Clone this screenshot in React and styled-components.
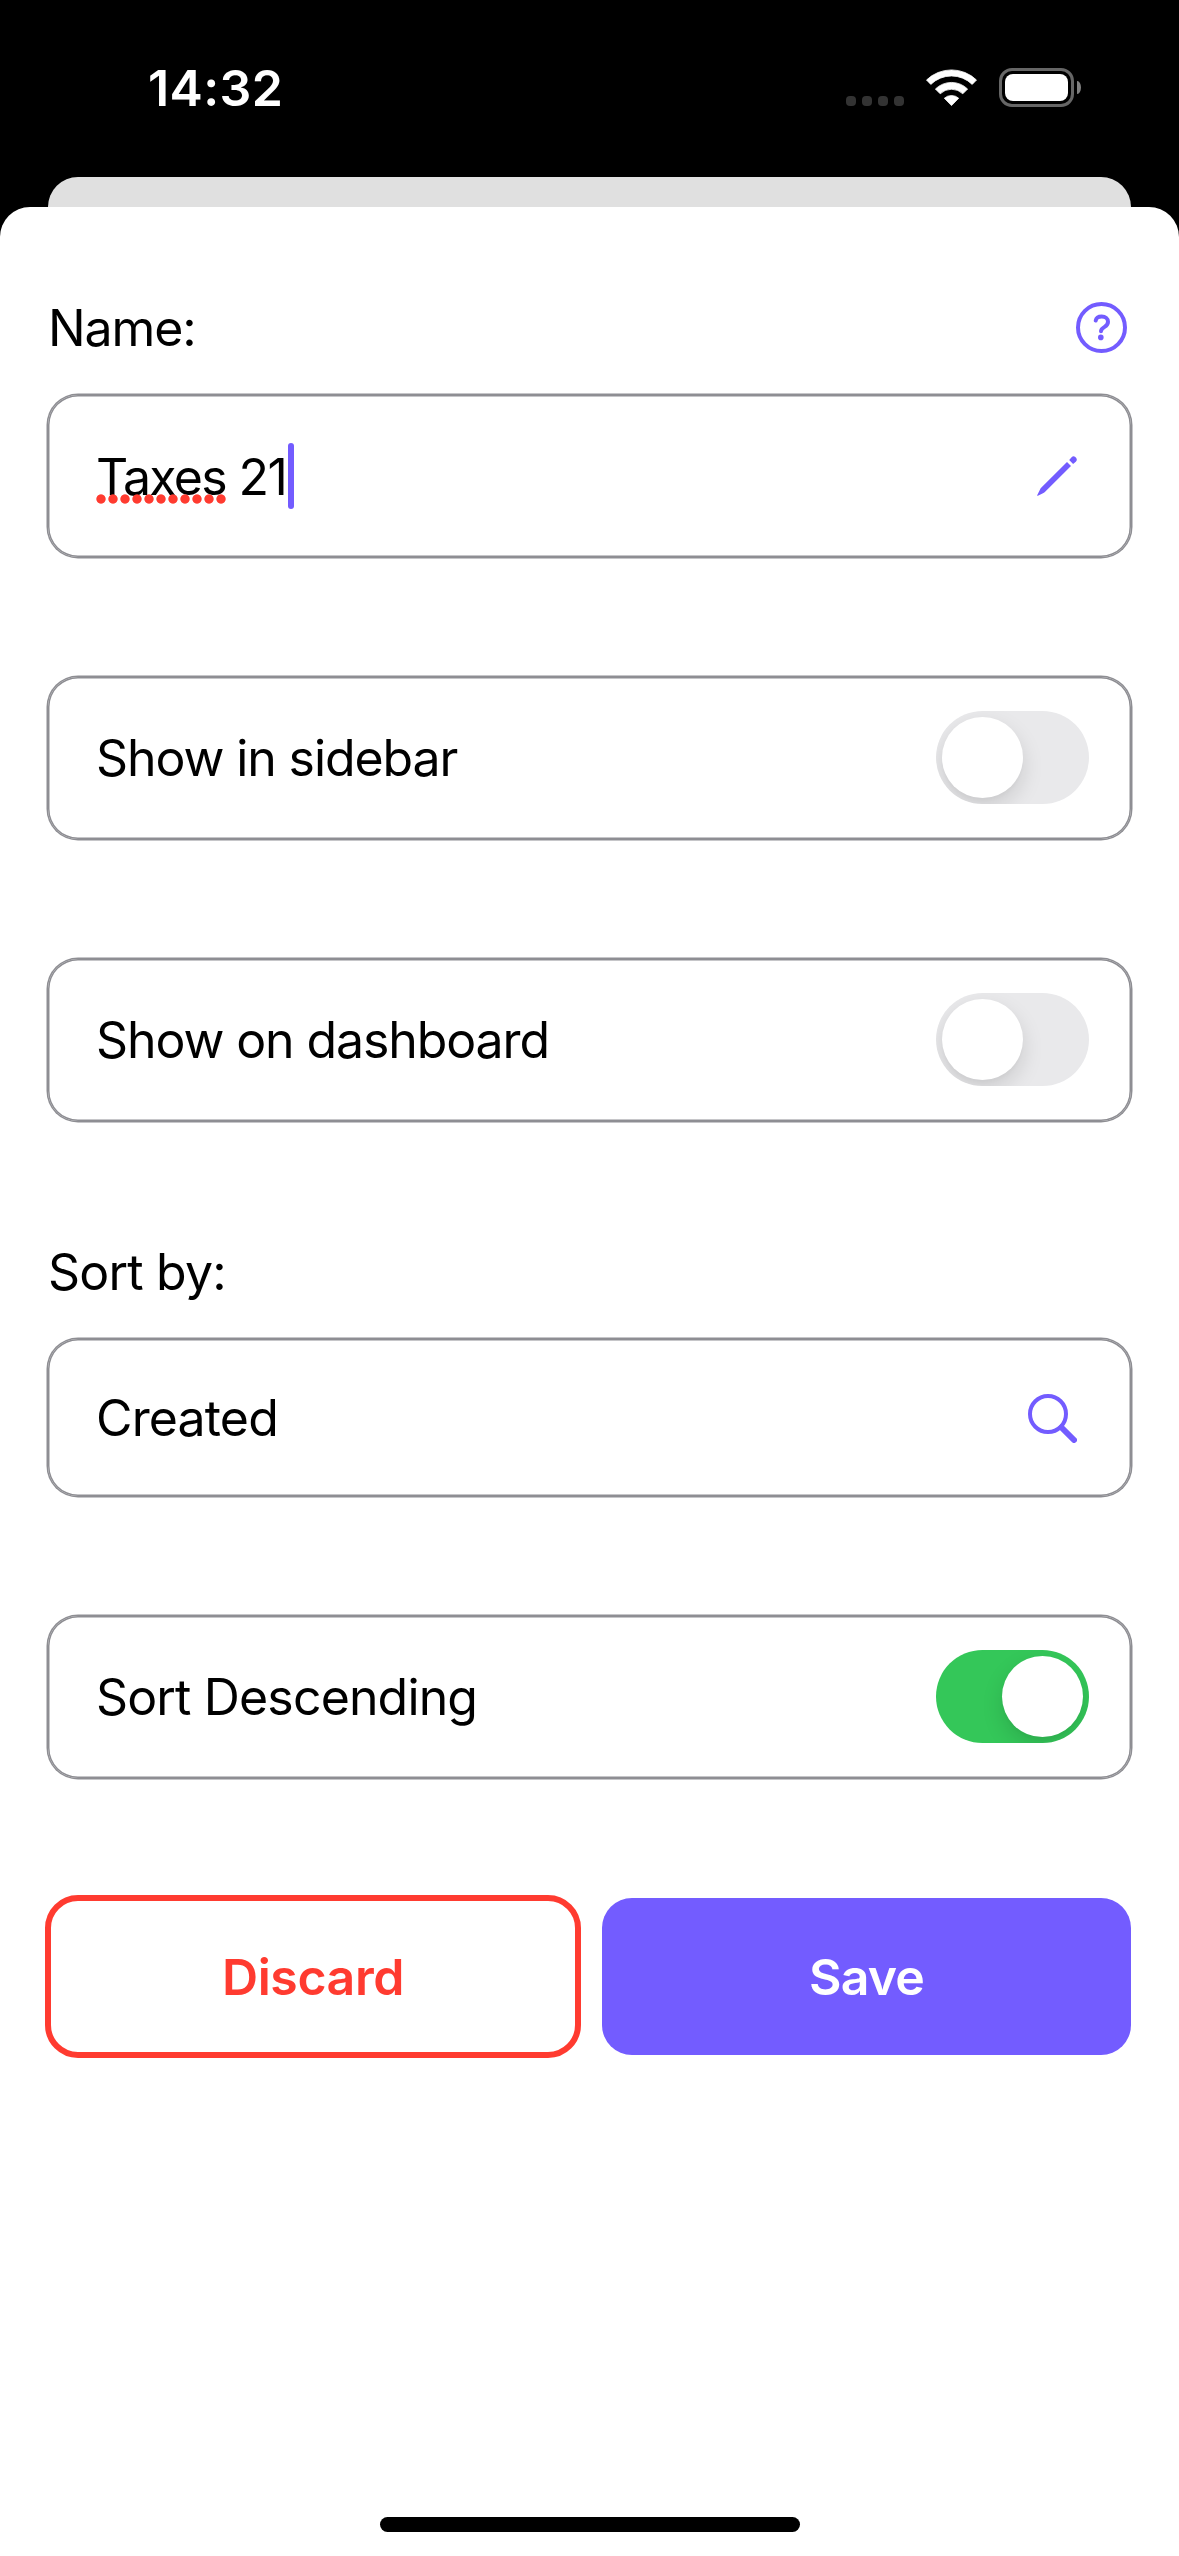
import React, { useState } from "react";
import styled, { createGlobalStyle } from "styled-components";

const ACCENT = "#735cff";
const DANGER = "#ff3b30";
const SUCCESS = "#34c759";
const OUTLINE = "#8e8e93";

const GlobalStyle = createGlobalStyle`
  * { box-sizing: border-box; }
  body {
    margin: 0;
    background: #000;
    color: #000;
    font-family: Inter, "Liberation Sans", sans-serif;
    font-size: 50px;
    line-height: 60px;
    -webkit-font-smoothing: antialiased;
  }
`;

const Screen = styled.div`
  display: flex;
  flex-direction: column;
  width: 1179px;
  height: 2556px;
  overflow: hidden;
  background: #000;
`;

const StatusBar = styled.header`
  display: flex;
  justify-content: space-between;
  height: 177px;
  padding: 58px 98px 0 148px;
  color: #fff;
`;

const Clock = styled.span`
  font-size: 50px;
  font-weight: 600;
  letter-spacing: ${(p) => p.$tracking}px;
`;

const StatusIcons = styled.div`
  display: flex;
  align-items: flex-start;
  padding-top: 10px;
`;

const SignalDots = styled.div`
  display: flex;
  gap: 6px;
  padding-top: 28px;
  margin-right: 22px;
`;

const SignalDot = styled.i`
  width: 10px;
  height: 10px;
  border-radius: 4px;
  background: #333;
`;

const WifiIcon = styled.svg`
  width: 51px;
  height: 37px;
  margin: 1px 22px 0 0;
`;

const Battery = styled.div`
  width: 75px;
  height: 39px;
  padding: 3px;
  border: 3px solid #666;
  border-radius: 13px;
`;

const BatteryLevel = styled.div`
  height: 27px;
  border-radius: 8px;
  background: #fff;
`;

const BatteryCap = styled.div`
  width: 4px;
  height: 13px;
  margin: 13px 0 0 3px;
  border-radius: 0 4px 4px 0 / 0 7px 7px 0;
  background: #808080;
`;

const BackCard = styled.div`
  flex: none;
  height: 30px;
  margin: 0 48px;
  border-radius: 30px 30px 0 0;
  background: #e0e0e0;
`;

const Sheet = styled.main`
  display: flex;
  flex: 1;
  flex-direction: column;
  align-items: stretch;
  padding: 91px 48px 24px;
  border-radius: 30px 30px 0 0;
  background: #fff;
`;

const LabelRow = styled.div`
  display: flex;
  align-items: center;
  justify-content: space-between;
  height: 60px;
  margin-top: ${(p) => p.$top || 0}px;
  margin-bottom: 37px;
  padding-right: 4px;
`;

const Text = styled.span`
  letter-spacing: ${(p) => p.$tracking || 0}px;
  white-space: pre;
`;

const Field = styled.div`
  display: flex;
  align-items: center;
  justify-content: space-between;
  height: ${(p) => p.$height || 162}px;
  margin-bottom: ${(p) => p.$gap ?? 120}px;
  padding: 0 ${(p) => p.$right || 42}px 0 48px;
  border-radius: 30px;
  background: #fff;
  box-shadow: 0 0 0 1.5px ${OUTLINE}, inset 0 0 0 1.5px ${OUTLINE};
`;

const NameValue = styled.div`
  position: relative;
  display: flex;
  padding: 3px 0 1px;
`;

const Misspelled = styled.span`
  position: relative;
  letter-spacing: -1.7px;
  &::after {
    content: "";
    position: absolute;
    left: -1px;
    bottom: 2px;
    width: 132px;
    height: 12px;
    background: radial-gradient(circle at 6px 6px, ${DANGER} 4.2px, transparent 5.1px) 0 0 / 12px 12px repeat-x;
  }
`;

const Caret = styled.i`
  position: absolute;
  left: 192px;
  top: -1px;
  width: 6px;
  height: 66px;
  border-radius: 3px;
  background: ${ACCENT};
`;

const Icon = styled.svg`
  flex: none;
  width: ${(p) => p.$size}px;
  height: ${(p) => p.$size}px;
  margin-top: ${(p) => p.$drop || 0}px;
  color: ${ACCENT};
`;

const Track = styled.button`
  display: flex;
  justify-content: ${(p) => (p.$on ? "flex-end" : "flex-start")};
  width: 153px;
  height: 93px;
  margin: 0 0 1px;
  padding: 6px;
  overflow: hidden;
  border: 0;
  border-radius: 47px;
  background: ${(p) => (p.$on ? SUCCESS : "#e9e9eb")};
`;

const Thumb = styled.span`
  width: 81px;
  height: 81px;
  border-radius: 50%;
  background: #fff;
  box-shadow: 0 9px 21px rgba(0, 0, 0, 0.13), 0 3px 3px rgba(0, 0, 0, 0.02);
`;

const Actions = styled.div`
  display: grid;
  grid-template-columns: 530px 529px;
  gap: 24px;
`;

const ActionButton = styled.button`
  height: ${(p) => (p.$primary ? 157 : 163)}px;
  margin: ${(p) => (p.$primary ? 0 : -3)}px;
  padding: 0;
  border: ${(p) => (p.$primary ? "0" : `6px solid ${DANGER}`)};
  border-radius: ${(p) => (p.$primary ? 30 : 33)}px;
  color: ${(p) => (p.$primary ? "#fff" : DANGER)};
  background: ${(p) => (p.$primary ? ACCENT : "#fff")};
  font: inherit;
  font-weight: 600;
  letter-spacing: ${(p) => p.$tracking}px;
`;

const HomeIndicator = styled.div`
  width: 420px;
  height: 15px;
  margin: auto auto 0 332px;
  border-radius: 8px;
  background: #000;
`;

function Toggle({ initial, label }) {
  const [on, setOn] = useState(initial);
  return (
    <Track type="button" role="switch" aria-checked={on} aria-label={label} $on={on} onClick={() => setOn(!on)}>
      <Thumb />
    </Track>
  );
}

function ToggleField({ label, initial = false, gap, tracking }) {
  return (
    <Field $gap={gap}>
      <Text $tracking={tracking}>{label}</Text>
      <Toggle initial={initial} label={label} />
    </Field>
  );
}

export default function App() {
  return (
    <>
      <GlobalStyle />
      <Screen>
        <StatusBar>
          <Clock $tracking={0.4}>14:32</Clock>
          <StatusIcons>
            <SignalDots>
              <SignalDot />
              <SignalDot />
              <SignalDot />
              <SignalDot />
            </SignalDots>
            <WifiIcon viewBox="0 0 51 37" fill="#fff" stroke="#fff" strokeWidth="0.8" strokeLinejoin="round">
              <path d="M.5 11A36 36 0 0 1 50.5 11L46.2 15.4A29.6 29.6 0 0 0 4.8 15.4Z" />
              <path d="M9.4 20A23 23 0 0 1 41.6 20L36.8 24.8A16.2 16.2 0 0 0 14.2 24.8Z" />
              <path d="M18.3 29.2A11 11 0 0 1 32.7 29.2L25.5 36.6Z" />
            </WifiIcon>
            <Battery>
              <BatteryLevel />
            </Battery>
            <BatteryCap />
          </StatusIcons>
        </StatusBar>
        <BackCard />
        <Sheet>
          <LabelRow>
            <Text $tracking={-1.1}>Name:</Text>
            <Icon $size={51} $drop={-1} viewBox="0 0 51 51" fill="none" stroke="currentColor" strokeWidth="4">
              <circle cx="25.5" cy="25.5" r="23.5" />
              <path d="M19.7 18.6C20.2 16 22.4 14.6 25.7 14.6C29.4 14.6 32 16.7 32 19.8C32 22.4 30.6 23.7 28.6 24.9C26.2 26.3 25 27.4 25 29.2" strokeLinecap="round" />
              <circle cx="24.8" cy="35.4" r="2.8" fill="currentColor" stroke="none" />
            </Icon>
          </LabelRow>
          <Field $right={54}>
            <NameValue>
              <Text $tracking={-1.5}>
                <Misspelled>Taxes</Misspelled> 21
              </Text>
              <Caret />
            </NameValue>
            <Icon $size={40} viewBox="0 0 40 40" fill="currentColor">
              <path d="M30 6L34 10L8.4 35.6Q7.4 36.6 6 37.2L.9 39.7Q-.1 40 .3 39.1L2.8 34Q3.4 32.6 4.4 31.6Z" />
              <path d="M32.2 3.9L34.6 1.2Q36.1-.2 38 .7Q39.7 1.6 39.8 3.6Q39.9 4.7 38.8 5.7L36.1 8Z" />
            </Icon>
          </Field>
          <ToggleField label="Show in sidebar" tracking={-1.1} />
          <ToggleField label="Show on dashboard" gap={0} tracking={-1.1} />
          <LabelRow $top={121}>
            <Text $tracking={-0.8}>Sort by:</Text>
          </LabelRow>
          <Field $height={157} $right={54}>
            <Text $tracking={-0.85}>Created</Text>
            <Icon $size={49} $drop={2} viewBox="0 0 49 49" fill="none" stroke="currentColor" strokeLinecap="round">
              <circle cx="20" cy="20" r="18" strokeWidth="4" />
              <path d="M33.5 33.5L46 46" strokeWidth="6" />
            </Icon>
          </Field>
          <ToggleField label="Sort Descending" initial tracking={-0.85} />
          <Actions>
            <ActionButton type="button" $tracking={-0.4}>Discard</ActionButton>
            <ActionButton type="button" $primary $tracking={-0.9}>Save</ActionButton>
          </Actions>
          <HomeIndicator />
        </Sheet>
      </Screen>
    </>
  );
}
